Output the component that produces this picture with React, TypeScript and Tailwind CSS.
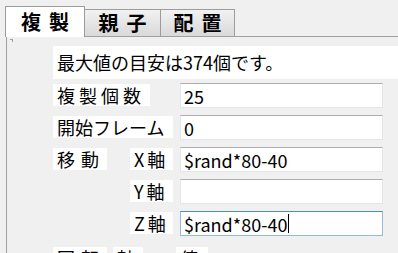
const font = "font-['Noto_Sans_CJK_JP','Noto_Sans_CJK_SC',sans-serif]";

const Label = ({ text, className }: { text: string; className: string }) => {
  return (
    <div
      className={`mt-[1px] h-[22px] bg-white pl-[4px] text-[18px] leading-[22px] whitespace-nowrap ${className}`}
    >
      {text}
    </div>
  );
};

const Field = ({ value, focused }: { value: string; focused?: boolean }) => {
  return (
    <div
      className={`flex h-[25px] w-[203px] items-center bg-white pl-[3px] text-[18px] whitespace-nowrap border ${
        focused
          ? "border-[#8fbbe3] border-t-[#4c8ec4]"
          : "border-[#e2e6ec] border-t-[#acadb3]"
      }`}
    >
      <span className="leading-[22px]">{value}</span>
      {focused && <span className="ml-[1px] h-[19px] w-[1px] bg-black" />}
    </div>
  );
};

export default function App() {
  return (
    <div
      className={`h-[253px] w-[398px] overflow-hidden bg-[#f0f0f0] text-black ${font}`}
    >
      {/* tabs */}
      <div className="flex h-[36px] items-end pl-[5px]">
        <div className="relative z-10 mb-[-1px] flex h-[31px] w-[80px] items-center justify-center border border-b-0 border-[#9c9c9c] bg-white text-[20px] font-bold tracking-[8px] indent-[8px]">
          複製
        </div>
        <div className="flex h-[27px] w-[76px] items-center justify-center border-t border-r border-[#9c9c9c] bg-gradient-to-b from-[#f2f2f2] to-[#d9d9d9] text-[20px] font-bold tracking-[8px] indent-[8px]">
          親子
        </div>
        <div className="flex h-[27px] w-[74px] items-center justify-center border-t border-r border-[#9c9c9c] bg-gradient-to-b from-[#f2f2f2] to-[#d9d9d9] text-[20px] font-bold tracking-[8px] indent-[8px]">
          配置
        </div>
      </div>

      {/* panel */}
      <div className="relative ml-[6px] h-[240px] w-[420px] border-t border-l border-[#a0a0a0] pt-[9px] pl-[46px]">
        <div className="absolute left-[3px] top-[2px] h-[3px] w-[3px] border-t border-r border-[#a0a0a0]" />

        <div className="h-[33px] w-[360px] bg-white pl-[4px] text-[18px] leading-[33px] whitespace-nowrap">
          最大値の目安は374個です。
        </div>

        <div className="mt-[4px] flex flex-col gap-[7px]">
          <div className="flex h-[25px] items-start">
            <div className="flex w-[127px]">
              <Label text="複製個数" className="w-[97px] tracking-[4px]" />
            </div>
            <Field value="25" />
          </div>
          <div className="flex h-[25px] items-start">
            <div className="flex w-[127px]">
              <Label text="開始フレーム" className="w-[120px]" />
            </div>
            <Field value="0" />
          </div>
          <div className="flex h-[25px] items-start">
            <div className="flex w-[127px]">
              <Label text="移動" className="w-[54px] tracking-[6px]" />
              <Label text="X軸" className="ml-[23px] w-[43px] tracking-[3px]" />
            </div>
            <Field value="$rand*80-40" />
          </div>
          <div className="flex h-[25px] items-start">
            <div className="flex w-[127px]">
              <Label text="Y軸" className="ml-[77px] w-[43px] tracking-[3px]" />
            </div>
            <Field value="" />
          </div>
          <div className="flex h-[25px] items-start">
            <div className="flex w-[127px]">
              <Label text="Z軸" className="ml-[77px] w-[43px] tracking-[3px]" />
            </div>
            <Field value="$rand*80-40" focused />
          </div>
        </div>

        <div className="mt-[10px] flex">
          <Label text="回転" className="w-[54px] tracking-[6px]" />
          <Label text="軸" className="ml-[6px] w-[30px]" />
          <Label text="値" className="ml-[33px] w-[32px]" />
        </div>
      </div>
    </div>
  );
}
